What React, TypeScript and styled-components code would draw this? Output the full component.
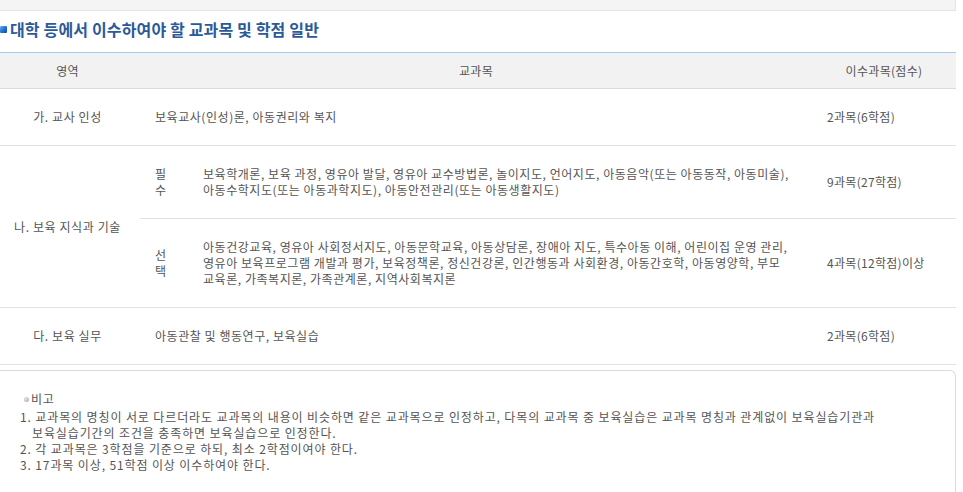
import React from "react";
import styled, { createGlobalStyle } from "styled-components";

const GlobalStyle = createGlobalStyle`
  html, body {
    margin: 0;
    padding: 0;
    background: #fff;
  }
  body {
    font-family: "Noto Sans CJK KR", "Noto Sans", sans-serif;
    font-size: 12px;
    color: #555;
  }
`;

const Page = styled.div`
  width: 956px;
`;

const TopStrip = styled.div`
  height: 10px;
  background: #f4f4f4;
  border-bottom: 1px solid #e4e4e4;
  border-right: 1px solid #e4e4e4;
`;

const Title = styled.h3`
  margin: 0;
  padding: 8px 0 13px 0;
  display: flex;
  align-items: center;
  gap: 3px;
  font-size: 16px;
  line-height: 20px;
  font-weight: bold;
  color: #2c5a98;
  letter-spacing: 0.15px;
`;

const TitleMark = styled.span`
  width: 7px;
  height: 7px;
  border-radius: 1px;
  background: linear-gradient(135deg, #6fb0f0 0%, #1f6fd0 55%, #0e4fa8 100%);
`;

const Table = styled.table`
  width: 956px;
  border-collapse: collapse;
  table-layout: fixed;
  border-top: 1px solid #9fcdee;
`;

const HeadCell = styled.th`
  background: #f2f2f2;
  border-bottom: 1px solid #dcdcdc;
  padding: 10px 0;
  line-height: 15px;
  font-size: 12px;
  font-weight: normal;
  color: #555;
  text-align: center;
  letter-spacing: 0.3px;
`;

const Row = styled.tr`
  border-bottom: 1px solid #e2e2e2;
`;

const AreaCell = styled.td`
  padding: 20px 5px 20px 0;
  line-height: 16px;
  text-align: center;
  vertical-align: middle;
  letter-spacing: 0.6px;
`;

const TextCell = styled.td`
  padding: 20px 10px 20px 15px;
  line-height: 16px;
  vertical-align: middle;
  text-align: left;
  white-space: nowrap;
  letter-spacing: 0.55px;
  border-bottom: 1px solid #e2e2e2;
`;

const LabelCell = styled.td`
  padding: 20px 0 20px 15px;
  line-height: 16px;
  vertical-align: middle;
  border-bottom: 1px solid #e2e2e2;
`;

const CountCell = styled.td`
  padding: 20px 0 20px 15px;
  line-height: 16px;
  vertical-align: middle;
  white-space: nowrap;
  letter-spacing: 0.3px;
  border-bottom: 1px solid #e2e2e2;
`;

const NoteBox = styled.div`
  margin-top: 5px;
  border: 1px solid #dadada;
  border-left: 0;
  border-bottom: 0;
  border-radius: 0 6px 0 0;
  padding: 20px 0 20px 20px;
  font-size: 12px;
  line-height: 16px;
`;

const NoteHead = styled.div`
  display: flex;
  align-items: center;
  gap: 2px;
  padding-left: 4px;
  margin-bottom: 2px;
  letter-spacing: 0.6px;
`;

const Dot = styled.span`
  width: 5px;
  height: 5px;
  border-radius: 50%;
  background: radial-gradient(circle at 35% 35%, #e2e2e2, #a9a9a9);
`;

const NoteItem = styled.div`
  padding-left: 12px;
  text-indent: -12px;
  white-space: nowrap;
  letter-spacing: 0.88px;
`;

type Course = {
  area?: string;
  rows?: number;
  label?: string[];
  lines: string[];
  count: string;
};

const courses: Course[] = [
  {
    area: "가. 교사 인성",
    lines: ["보육교사(인성)론, 아동권리와 복지"],
    count: "2과목(6학점)",
  },
  {
    area: "나. 보육 지식과 기술",
    rows: 2,
    label: ["필", "수"],
    lines: [
      "보육학개론, 보육 과정, 영유아 발달, 영유아 교수방법론, 놀이지도, 언어지도, 아동음악(또는 아동동작, 아동미술),",
      "아동수학지도(또는 아동과학지도), 아동안전관리(또는 아동생활지도)",
    ],
    count: "9과목(27학점)",
  },
  {
    label: ["선", "택"],
    lines: [
      "아동건강교육, 영유아 사회정서지도, 아동문학교육, 아동상담론, 장애아 지도, 특수아동 이해, 어린이집 운영 관리,",
      "영유아 보육프로그램 개발과 평가, 보육정책론, 정신건강론, 인간행동과 사회환경, 아동간호학, 아동영양학, 부모",
      "교육론, 가족복지론, 가족관계론, 지역사회복지론",
    ],
    count: "4과목(12학점)이상",
  },
  {
    area: "다. 보육 실무",
    lines: ["아동관찰 및 행동연구, 보육실습"],
    count: "2과목(6학점)",
  },
];

function withBreaks(lines: string[]) {
  return lines.map((l, i) => (
    <React.Fragment key={i}>
      {i > 0 && <br />}
      {l}
    </React.Fragment>
  ));
}

export default function App() {
  return (
    <Page>
      <GlobalStyle />
      <TopStrip />
      <Title>
        <TitleMark />
        대학 등에서 이수하여야 할 교과목 및 학점 일반
      </Title>

      <Table>
        <colgroup>
          <col style={{ width: 140 }} />
          <col style={{ width: 48 }} />
          <col style={{ width: 624 }} />
          <col style={{ width: 144 }} />
        </colgroup>
        <thead>
          <tr>
            <HeadCell style={{ paddingRight: 5 }}>영역</HeadCell>
            <HeadCell colSpan={2}>교과목</HeadCell>
            <HeadCell>이수과목(점수)</HeadCell>
          </tr>
        </thead>
        <tbody>
          {courses.map((c, i) => (
            <Row key={i}>
              {c.area && <AreaCell rowSpan={c.rows ?? 1}>{c.area}</AreaCell>}
              {c.label ? (
                <>
                  <LabelCell>{withBreaks(c.label)}</LabelCell>
                  <TextCell>{withBreaks(c.lines)}</TextCell>
                </>
              ) : (
                <TextCell colSpan={2}>{withBreaks(c.lines)}</TextCell>
              )}
              <CountCell>{c.count}</CountCell>
            </Row>
          ))}
        </tbody>
      </Table>

      <NoteBox>
        <NoteHead>
          <Dot />
          비고
        </NoteHead>
        <NoteItem>
          1. 교과목의 명칭이 서로 다르더라도 교과목의 내용이 비슷하면 같은 교과목으로 인정하고, 다목의 교과목 중 보육실습은 교과목 명칭과 관계없이 보육실습기관과
          <br />
          보육실습기간의 조건을 충족하면 보육실습으로 인정한다.
        </NoteItem>
        <NoteItem>2. 각 교과목은 3학점을 기준으로 하되, 최소 2학점이여야 한다.</NoteItem>
        <NoteItem>3. 17과목 이상, 51학점 이상 이수하여야 한다.</NoteItem>
      </NoteBox>
    </Page>
  );
}
